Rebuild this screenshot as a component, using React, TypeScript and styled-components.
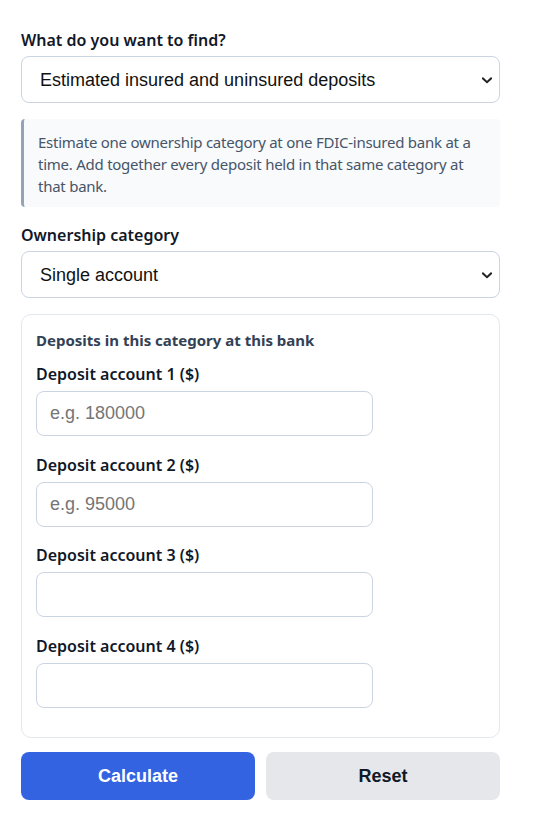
import React from "react";
import styled, { createGlobalStyle } from "styled-components";

const GlobalStyle = createGlobalStyle`
  * {
    box-sizing: border-box;
  }
  body {
    margin: 0;
    background: #ffffff;
    font-family: "Noto Sans", "Open Sans", sans-serif;
    color: #1e293b;
  }
`;

const Page = styled.div`
  width: 547px;
  padding: 28px 47px 37px 21px;
`;

const Form = styled.form`
  display: flex;
  flex-direction: column;
`;

const Field = styled.div`
  display: flex;
  flex-direction: column;
  gap: 4px;
`;

const Label = styled.label`
  font-size: 16px;
  line-height: 24px;
  font-weight: 600;
  color: #111827;
`;

const SelectWrap = styled.div`
  position: relative;
`;

const Select = styled.select`
  width: 100%;
  height: 47px;
  appearance: none;
  -webkit-appearance: none;
  border: 1px solid #cbd5e1;
  border-radius: 8px;
  background: #ffffff;
  padding: 0 36px 0 18px;
  font-family: "Liberation Sans", Arial, sans-serif;
  font-size: 18px;
  color: #111111;
`;

const Chevron = styled.svg`
  position: absolute;
  right: 8px;
  top: 50%;
  margin-top: -3px;
  pointer-events: none;
`;

const Note = styled.p`
  margin: 16px 0 16px;
  padding: 12px 16px 10px 14px;
  background: #f8fafc;
  border-left: 3px solid #94a3b8;
  border-radius: 4px;
  font-size: 15px;
  line-height: 22px;
  letter-spacing: -0.25px;
  color: #475569;
`;

const Card = styled.fieldset`
  margin: 16px 0 0;
  padding: 14px 14px 13px;
  border: 1px solid #e2e8f0;
  border-radius: 10px;
  display: flex;
  flex-direction: column;
`;

const CardTitle = styled.div`
  font-size: 15px;
  line-height: 22px;
  font-weight: 700;
  color: #334155;
  margin-bottom: 11px;
`;

const InputField = styled.div`
  display: flex;
  flex-direction: column;
  gap: 5px;
  margin-bottom: 16.5px;
`;

const Input = styled.input`
  width: 337px;
  height: 45px;
  border: 1px solid #cbd5e1;
  border-radius: 8px;
  padding: 0 13px;
  font-family: "Liberation Sans", Arial, sans-serif;
  font-size: 18px;
  color: #111111;
  background: #ffffff;

  &::placeholder {
    color: #757575;
  }
`;

const Actions = styled.div`
  display: grid;
  grid-template-columns: 1fr 1fr;
  gap: 11px;
  margin-top: 14px;
`;

const Button = styled.button<{ $primary?: boolean }>`
  height: 48px;
  border: none;
  border-radius: 8px;
  font-family: "Liberation Sans", Arial, sans-serif;
  font-size: 18px;
  font-weight: 700;
  cursor: pointer;
  background: ${(props) => (props.$primary ? "#3463e2" : "#e5e7eb")};
  color: ${(props) => (props.$primary ? "#ffffff" : "#111827")};
`;

const deposits = [
  { id: 1, placeholder: "e.g. 180000" },
  { id: 2, placeholder: "e.g. 95000" },
  { id: 3, placeholder: "" },
  { id: 4, placeholder: "" },
];

const ChevronIcon = () => (
  <Chevron width="10" height="7" viewBox="0 0 10 7">
    <path
      d="M1 1.5 L5 5.2 L9 1.5"
      fill="none"
      stroke="#222"
      strokeWidth="2"
      strokeLinecap="square"
    />
  </Chevron>
);

const App: React.FC = () => {
  return (
    <Page>
      <GlobalStyle />
      <Form onSubmit={(e) => e.preventDefault()}>
        <Field>
          <Label htmlFor="goal">What do you want to find?</Label>
          <SelectWrap>
            <Select id="goal" defaultValue="estimate">
              <option value="estimate">Estimated insured and uninsured deposits</option>
            </Select>
            <ChevronIcon />
          </SelectWrap>
        </Field>

        <Note>
          Estimate one ownership category at one FDIC-insured bank at a time. Add
          together every deposit held in that same category at that bank.
        </Note>

        <Field>
          <Label htmlFor="category">Ownership category</Label>
          <SelectWrap>
            <Select id="category" defaultValue="single">
              <option value="single">Single account</option>
            </Select>
            <ChevronIcon />
          </SelectWrap>
        </Field>

        <Card>
          <CardTitle>Deposits in this category at this bank</CardTitle>
          {deposits.map((d) => (
            <InputField key={d.id}>
              <Label htmlFor={`deposit-${d.id}`}>Deposit account {d.id} ($)</Label>
              <Input id={`deposit-${d.id}`} type="text" placeholder={d.placeholder} />
            </InputField>
          ))}
        </Card>

        <Actions>
          <Button type="submit" $primary>
            Calculate
          </Button>
          <Button type="button">Reset</Button>
        </Actions>
      </Form>
    </Page>
  );
};

export default App;
